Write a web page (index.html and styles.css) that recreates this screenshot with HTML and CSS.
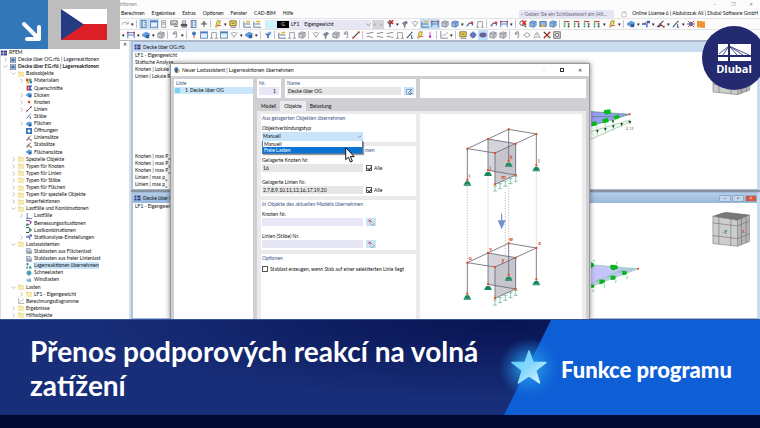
FILE: index.html
```html
<!DOCTYPE html>
<html lang="cs">
<head>
<meta charset="utf-8">
<title>Přenos podporových reakcí na volná zatížení</title>
<link rel="stylesheet" href="styles.css">
</head>
<body>
<svg class="defs" aria-hidden="true">
  <symbol id="folder" viewBox="0 0 10 10"><path d="M0 1h4l1 1h5v8H0z" fill="#e9d58b"/><path d="M0 3h10v7H0z" fill="#f8e9ae"/></symbol>
  <symbol id="rfem" viewBox="0 0 10 10"><path d="M0 1h10v8H0z" fill="#2b3c86"/><path d="M0 5h10M4 1v8" stroke="#fff"/></symbol>
  <symbol id="model" viewBox="0 0 10 10"><rect x="1" y="0" width="8" height="10" fill="#c7d6ea" stroke="#44546f"/><circle cx="5" cy="5" r="3" fill="#3b72b5"/></symbol>
  <symbol id="mat" viewBox="0 0 10 10"><path d="M0 1h4v4H0z" fill="#e23b2e"/><path d="M5 1h4v4H5z" fill="#3bb54a"/><path d="M1 5h4v4H1z" fill="#e8b52c"/><path d="M6 5h4v4H6z" fill="#3a78d6"/></symbol>
  <symbol id="isec" viewBox="0 0 10 10"><path d="M1 1h5v2H4v4h2v2H1z" fill="#d8322c"/><path d="M5 1h5v2H8v4h2v2H5z" fill="#2d5fc4"/></symbol>
  <symbol id="plate" viewBox="0 0 10 10"><path d="M0 4l5-3 5 2-1 4-4 2-5-3z" fill="#5f9bd8"/><path d="M5 5h4v4H5z" fill="#2f5f9e"/></symbol>
  <symbol id="dot" viewBox="0 0 10 10"><circle cx="5" cy="5" r="2" fill="#d43b32"/></symbol>
  <symbol id="line" viewBox="0 0 10 10"><path d="M1 9L9 1" stroke="#444" stroke-width="1.4"/><circle cx="1.5" cy="8.5" r="1.3" fill="#d43b32"/><circle cx="8.5" cy="1.5" r="1.3" fill="#d43b32"/></symbol>
  <symbol id="bar" viewBox="0 0 10 10"><path d="M1 9L8 1" stroke="#555" stroke-width="1.3"/><path d="M7 5v4h2" stroke="#3670b8" fill="none" stroke-width="1.4"/></symbol>
  <symbol id="hole" viewBox="0 0 10 10"><path d="M0 0h10v10H0z" fill="#3a75b9"/><circle cx="5" cy="5" r="2.5" fill="#fff"/></symbol>
  <symbol id="lset" viewBox="0 0 10 10"><path d="M0 9L8 1M2 9l3-3 4 3" stroke="#444" fill="none" stroke-width="1.3"/><circle cx="4" cy="5" r="1.2" fill="#d43b32"/><circle cx="8.500" cy="8.500" r="1.2" fill="#d43b32"/></symbol>
  <symbol id="lc" viewBox="0 0 10 10"><path d="M2 0v9h8" stroke="#4a6289" fill="none" stroke-width="1.3"/><path d="M0 9h5" stroke="#4a6289"/></symbol>
  <symbol id="ds" viewBox="0 0 10 10"><path d="M0 1h5l4 3-4 4H0" fill="none" stroke="#4b3d90" stroke-width="1.6"/><path d="M6 0l4 4-3 2z" fill="#d33bc0"/><path d="M0 6h3v4H0z" fill="#39a85a"/></symbol>
  <symbol id="co" viewBox="0 0 10 10"><path d="M0 1h5l4 4-4 4H0" fill="none" stroke="#333" stroke-width="1.6"/><path d="M5 2l5 3-5 2z" fill="#39a85a"/></symbol>
  <symbol id="sa" viewBox="0 0 10 10"><path d="M0 5h5" stroke="#2d62b6" stroke-width="2"/><path d="M6 1h4v3H7v5H5z" fill="#3b66b8"/><path d="M3 3h2v2H3z" fill="#d83b35"/></symbol>
  <symbol id="wiz" viewBox="0 0 10 10"><path d="M1 1h6l2 3v5H1z" fill="#e9eef6" stroke="#5d6f8d"/><path d="M2 8l5-5M3 3v4h5" stroke="#4379b8" fill="none"/><circle cx="7" cy="7" r="1.2" fill="#d43b32"/></symbol>
  <symbol id="react" viewBox="0 0 10 10"><path d="M1 0h3v4H1zM5 8l2-4 3 5H5zM0 9l2-4 2 4z" fill="#2a8f92"/></symbol>
  <symbol id="snow" viewBox="0 0 10 10"><circle cx="5" cy="5" r="4" fill="#6fb6c9"/><path d="M5 0v10M0 5h10M2 2l6 6M8 2L2 8" stroke="#2b8aa6" stroke-width=".8"/></symbol>
  <symbol id="wind" viewBox="0 0 10 10"><path d="M0 5h8M2 7h6M4 2l4 3-3 3" stroke="#3d96b5" fill="none" stroke-width="1.4"/></symbol>
  <symbol id="chart" viewBox="0 0 10 10"><path d="M1 0v9h9" stroke="#778" fill="none"/><path d="M2 7l3-3 2 1 3-4" stroke="#9ab" fill="none"/></symbol>
  <symbol id="undo" viewBox="0 0 10 10"><path d="M1 6c1-4 6-4 8-1M9 2v3H6" stroke="#999" fill="none"/></symbol>
  <symbol id="cols" viewBox="0 0 10 10"><rect x="1.500" y=".5" width="6" height="9" fill="#dfeaf7" stroke="#4f75a6"/><path d="M3 1v8M5 3h2M5 6h2" stroke="#6d8fbb"/></symbol>
  <symbol id="win" viewBox="0 0 10 10"><rect x=".5" y="1" width="9" height="8" fill="#d5e4f5" stroke="#5a83b6"/><path d="M1 2h8" stroke="#4777b2" stroke-width="1.6"/><path d="M2 5h6M2 7h6" stroke="#fff"/></symbol>
  <symbol id="sheet" viewBox="0 0 10 10"><path d="M2 .5h5v9H2z" fill="#f4f4f6" stroke="#8b8f9c"/><path d="M3 3h3M3 5h3" stroke="#888"/></symbol>
  <symbol id="graph" viewBox="0 0 10 10"><path d="M1 1h8v5H1z" fill="#f3f3f3" stroke="#555"/><path d="M2 5l2-2 2 2 2-2M5 8h5" stroke="#555" fill="none"/></symbol>
  <symbol id="print" viewBox="0 0 10 10"><path d="M1 5h8v3H1z" fill="#555"/><path d="M3 1h4v4H3zM3 8h5v2H3z" fill="#ddd" stroke="#555" stroke-width=".7"/></symbol>
  <symbol id="cross" viewBox="0 0 10 10"><path d="M5 1v8M1 5h8" stroke="#666" stroke-width="1.2"/><circle cx="5" cy="4" r="2" fill="#777"/></symbol>
  <symbol id="edit" viewBox="0 0 10 10"><path d="M2 9L4 1h4L7 5 3 9z" fill="#f4dc50" stroke="#756a2b" stroke-width=".7"/><path d="M4 7h5" stroke="#d8322c"/></symbol>
  <symbol id="note" viewBox="0 0 10 10"><path d="M1 1h8v6H1z" fill="#f2d648" stroke="#706330"/><path d="M3 4h4M2 9h7" stroke="#555"/></symbol>
  <symbol id="load" viewBox="0 0 10 10"><path d="M1 2v7h9M2 5h7" stroke="#3e5e8a" fill="none"/><path d="M4 2h5" stroke="#e3b832" stroke-width="2"/></symbol>
  <symbol id="frame" viewBox="0 0 10 10"><path d="M1 9V2h8v7M1 5h8" stroke="#3f6fb0" fill="none" stroke-width="1.1"/><path d="M0 2h2M8 2h2" stroke="#d34" stroke-width="2"/></symbol>
  <symbol id="gframe" viewBox="0 0 10 10"><path d="M2 9V2h6v7M0 9h4M6 9h4" stroke="#8a8d94" fill="none"/></symbol>
  <symbol id="rows" viewBox="0 0 10 10"><path d="M1 3h3l1-1h4M1 7h4l2 1h2" stroke="#858990" fill="none" stroke-width="1.2"/></symbol>
  <symbol id="vee" viewBox="0 0 10 10"><path d="M1 2l4 6 4-6M3 2h4" stroke="#888c94" fill="none"/></symbol>
  <symbol id="filt" viewBox="0 0 10 10"><path d="M1 2h8L6 6v3H4V6z" fill="#3f72b4"/><path d="M4 0l5 5M9 0L4 5" stroke="#d8221c" stroke-width="1.7"/></symbol>
  <symbol id="bfilt" viewBox="0 0 10 10"><path d="M1 3h8L6 6v3H4V6z" fill="#3f72b4"/><path d="M5 1h4v3H5z" fill="#7da7dc"/></symbol>
  <symbol id="fun" viewBox="0 0 10 10"><path d="M1 4l5-3 3 2-3 3-1 4H4L3 6z" fill="#7b8798"/></symbol>
  <symbol id="gbox" viewBox="0 0 10 10"><path d="M1 3l3-2 5 1v5L6 9 1 8z" fill="#c7cad1" stroke="#777b85" stroke-width=".8"/><path d="M1 3l5 1 3-2M6 4v5" stroke="#777b85" fill="none" stroke-width=".8"/></symbol>
  <symbol id="bbox" viewBox="0 0 10 10"><path d="M1 3l3-2 5 1v5L6 9 1 8z" fill="#8fb7e3" stroke="#3e6da9" stroke-width=".8"/><path d="M1 3l5 1 3-2M6 4v5" stroke="#3e6da9" fill="none" stroke-width=".8"/></symbol>
  <symbol id="mark" viewBox="0 0 10 10"><path d="M1 8l3-4h4v3" stroke="#3c69ae" fill="none" stroke-width="1.5"/><path d="M6 2h3v3H6z" fill="#d43b32"/></symbol>
  <symbol id="find" viewBox="0 0 10 10"><circle cx="4" cy="4" r="3" fill="none" stroke="#555"/><path d="M6 6l3 3" stroke="#555" stroke-width="1.5"/><path d="M4 1l5 5M9 1L4 6" stroke="#d8221c" stroke-width="1.7"/></symbol>
  <symbol id="axes" viewBox="0 0 10 10"><path d="M2 1v8" stroke="#3a9a55" stroke-width="2" stroke-dasharray="2 1"/><path d="M3 2h5" stroke="#d33" stroke-width="1.5"/><path d="M7 4v5" stroke="#333" stroke-width="2" stroke-dasharray="2 1"/></symbol>
  <symbol id="star" viewBox="0 0 10 10"><path d="M1 1l8 8M9 1L1 9M0 5h10" stroke="#d43a39" stroke-width="1.2"/><circle cx="5" cy="5" r="2.500" fill="#4b70bb"/></symbol>
  <symbol id="orange" viewBox="0 0 10 10"><path d="M0 1l10 1v8L0 9z" fill="#f19336"/></symbol>
  <symbol id="cube" viewBox="0 0 10 10"><path d="M1 2h8v6H1z" fill="#8eb9ea" stroke="#315f9b"/><path d="M3 6h4v3H3z" fill="#e5b43a"/></symbol>
  <symbol id="pin" viewBox="0 0 10 10"><path d="M4 1h3v7H5" stroke="#888" fill="none"/><circle cx="4" cy="3" r="2" fill="#a7abb4"/></symbol>
  <symbol id="bpin" viewBox="0 0 10 10"><path d="M5 3v6" stroke="#d53" stroke-width="1.2"/><circle cx="5" cy="3" r="2.500" fill="#3f7ac0"/></symbol>
  <symbol id="mag" viewBox="0 0 10 10"><path d="M5 1v5" stroke="#b13cbf"/><circle cx="5" cy="7" r="1.500" fill="#c21fc0"/></symbol>
  <symbol id="del" viewBox="0 0 10 10"><path d="M1 1l8 8" stroke="#333" stroke-width="1.500"/><path d="M9 1L1 9" stroke="#d8221c" stroke-width="1.800"/></symbol>
  <symbol id="dia" viewBox="0 0 10 10"><path d="M1 5l4-3 4 3-4 3z" fill="none" stroke="#888"/></symbol>
  <symbol id="tri" viewBox="0 0 10 10"><path d="M5 1v8M4 2L1 8h3M6 2l3 6H6" fill="none" stroke="#888" stroke-width=".8"/></symbol>
  <symbol id="cam" viewBox="0 0 10 10"><rect x="1" y="1" width="8" height="8" fill="#ddd" stroke="#555"/><circle cx="5" cy="5" r="2" fill="#fff" stroke="#555"/></symbol>
  <symbol id="gear" viewBox="0 0 10 10"><circle cx="5" cy="5" r="2.500" fill="none" stroke="#4a5fa8" stroke-width="1.800"/><path d="M5 0v10M0 5h10M2 2l6 6M8 2L2 8" stroke="#4a5fa8" stroke-width=".7"/></symbol>
  <symbol id="disc" viewBox="0 0 10 10"><ellipse cx="5" cy="5" rx="4.500" ry="3" fill="#4870aa"/><path d="M2 7l6-4" stroke="#d33" stroke-width="1.300"/></symbol>
  <symbol id="pick" viewBox="0 0 10 10"><path d="M1 1l3 3M4 1L1 4" stroke="#d8322c" stroke-width="1.400"/><path d="M4 3l5 4-2 .4L8 9 7 9.500 6 8 4.500 9z" fill="#fff" stroke="#777" stroke-width=".7"/></symbol>
  <symbol id="pen" viewBox="0 0 10 10"><path d="M1 2h6v7H1z" fill="#eef5fc" stroke="#5180ae" stroke-width=".9"/><path d="M3 7l6-6M4 8h5" stroke="#37628e" stroke-width="1.100"/></symbol>
  <symbol id="viewcube" viewBox="390 390 122 114">
    <path d="M396 408l38-12 72 8-36 16z" fill="#777"/><path d="M396 408l74 12v78l-74-8z" fill="#cdcdcd"/><path d="M470 420l36-16v80l-36 14z" fill="#b5b5b5"/>
    <path d="M396 428l74 9 36-15M396 466l74 9 36-15M414 411v81M450 417v79M482 415v79M496 409v79M408 404l76 11M420 400l74 8M420 412l36-13M450 417l34-15" stroke="#777" stroke-width="2" fill="none"/>
    <path d="M396 408l38-12 72 8v80l-36 14-74-8zM396 408l74 12v78M470 420l36-16" fill="none" stroke="#666" stroke-width="1.500"/>
  </symbol>
</svg>

<main class="stage">
  <section class="screen">
    <header class="titlebar">
      <span class="app-title">ktionen</span>
      <div class="winctl"><button aria-label="Minimieren">–</button><button aria-label="Wiederherstellen">❐</button><button aria-label="Schließen">✕</button></div>
    </header>
    <nav class="menubar">
      <a href="#">Berechnen</a><a href="#">Ergebnisse</a><a href="#">Extras</a><a href="#">Optionen</a><a href="#">Fenster</a><a href="#">CAD-BIM</a><a href="#">Hilfe</a>
      <input class="search" type="text" aria-label="Suche" placeholder="‣ Geben Sie ein Schlüsselwort ein (Alt...">
      <svg class="lic" viewBox="0 0 10 10"><path d="M1 3h8v6H1zM3 1h5v2" /></svg>
      <span class="license">Online License 6 | Abdulrzzak Ali | Dlubal Software GmbH</span>
    </nav>
    <div class="toolbar">
      <div class="tools" data-tools="undo v | cols* win* sheet graph print cols cross | edit v note | load load"></div>
      <div class="caselist"><i class="swatch"></i><b class="tag">G</b><span class="case">LF1</span><span>Eigengewicht</span><svg class="chev" viewBox="0 0 10 10"><path d="M1 3l4 4 4-4"/></svg></div>
      <div class="step"><button aria-label="Zurück">‹</button><button aria-label="Weiter">›</button></div>
      <div class="tools" data-tools="filt v fun vee load* frame* gbox bbox v mark gframe | mark frame v | find bbox cube bbox | axes axes axes axes v edit v | plate v sa v lset v bar v star orange"></div>
    </div>
    <div class="toolbar second">
      <div class="tools" data-tools="v frame v plate v gbox | pin v | bpin win gframe win vee v plate v | bfilt | load gframe gbox | vee fun gbox pin line | rows rows rows gframe bar edit mag | chart v | note gear disc* gbox gbox | pin dia tri del cam"></div>
    </div>
    <div class="work">
      <aside class="nav">
        <div class="nav-head"><button aria-label="Navigator schließen">✕</button></div>
        <ul class="tree" id="tree"></ul>
      </aside>
      <div class="mdi">
        <section class="doc upper">
          <h2 class="doc-title"><svg><use href="#rfem"/></svg>Decke über OG.rf6</h2>
          <div class="doc-body">
            <div class="legend">
              <p>LF1 - Eigengewicht<br>Statische Analyse<br>Knoten | Lokale<br>Linien | Lokale R</p>
              <p>Knoten | max P<sub>x</sub><br>Knoten | max P<sub>y</sub><br>Knoten | max P<sub>z</sub><br>Linien | max p<sub>y</sub><br>Linien | max p<sub>z</sub></p>
            </div>
            <svg class="canvas" viewBox="30 -90 498 411">
              <path d="M20 88l126 9-126 38z" fill="#9b9cf5"/><path d="M20 88l126 9-126 38M20 104h90" fill="none" stroke="#3f8f6c" stroke-width="2"/>
              <path d="M20 152l127-38v6l-127 56" fill="#f5fbf5" stroke="#6fa37a" stroke-width="1.500"/>
              <path d="M49 147v15M73 141v14M97 133v14M122 126v10" stroke="#6fa37a"/>
              <g fill="#05bd19"><path d="M70 84l18-2 2 13-16 3-6-7z"/><path d="M32 121l14-4 2 13-14 3z"/><path d="M64 112l16-5 3 14-18 3z"/><path d="M97 102l16-4 4 9-16 6z"/></g>
              <g fill="#0b5520"><path d="M45 144h8l-4 9zM69 138h8l-4 9zM93 130h8l-4 9zM118 123h8l-4 9zM142 117h9l-4 9zM91 115h9l-4 8z"/></g>
              <path d="M48 132v12M73 122v12M97 115v12" stroke="#0b8d25"/>
              <circle cx="146" cy="97" r="3" fill="#f22"/><text x="134" y="143" class="val">2.12</text>
              <use href="#viewcube" x="390" y="-70" width="122" height="114"/>
            </svg>
          </div>
        </section>
        <section class="doc lower">
          <h2 class="doc-title"><svg><use href="#rfem"/></svg>Decke über E<span class="docctl"><button aria-label="Minimieren">–</button><button aria-label="Maximieren">▫</button><button class="close" aria-label="Schließen">×</button></span></h2>
          <div class="doc-body">
            <div class="legend"><p>LF1 - Eigengewicht</p></div>
            <svg class="canvas" viewBox="30 368 498 352">
              <path d="M20 553l151 13-151 57z" fill="#c6c5fb"/><path d="M20 553l151 13-151 57M30 610l90-40 35-2" fill="none" stroke="#7fcf9a" stroke-width="2"/>
              <g fill="#07b51c"><path d="M88 554l20 1 3 10-16 6-8-7z"/><path d="M28 546l10 4v9l-10 5z"/><path d="M30 613l9 1v8l-9 2z"/><path d="M55 598l16 1-1 10-16 4z"/><path d="M88 586l15 1v11l-14 2z"/><path d="M122 572l15 1v10l-13 2z"/></g>
              <path d="M36 545l4-6M104 552l5-7M38 628l-4 8M71 613l-2 10M105 600l-2 9M139 588l-2 9M46 606l8-8M78 594l9-8M112 580l9-7" stroke="#35c34b" stroke-width="2"/>
              <circle cx="171" cy="566" r="3" fill="#f33"/>
              <use href="#viewcube" x="390" y="390" width="122" height="114"/>
              <text x="426" y="460" class="ax-y">-Y</text><text x="484" y="458" class="ax-x">X</text>
            </svg>
          </div>
        </section>
      </div>
    </div>

    <section class="dialog" role="dialog" aria-labelledby="dlg-title">
      <header class="dlg-bar">
        <svg viewBox="0 0 10 10"><circle cx="4" cy="4" r="3.500" fill="#3b6db3"/><path d="M4 9l5-5 1 3-3 3z" fill="#ecb92f"/><path d="M1 6l4-1 1 4-3 1z" fill="#45566e"/></svg>
        <h1 id="dlg-title">Neuer Lastassistent | Lagerreaktionen übernehmen</h1>
        <div class="winctl"><button class="dim" aria-label="Minimieren">–</button><button class="max" aria-label="Maximieren"><i></i></button><button aria-label="Schließen">✕</button></div>
      </header>
      <div class="dlg-body">
        <div class="list"><h3>Liste</h3><div class="list-row"><i></i><span>1</span>Decke über OG</div></div>
        <div class="main">
          <div class="top">
            <div class="box nr"><label for="nr">Nr.</label><input id="nr" type="text" value="1"></div>
            <div class="box name"><label for="nm">Name</label><div class="field"><input id="nm" class="ro" type="text" value="Decke über OG"><button class="sq" aria-label="Name bearbeiten"><svg><use href="#pen"/></svg></button></div></div>
            <div class="box blank"></div>
          </div>
          <div class="tabs" role="tablist"><button role="tab">Modell</button><button role="tab" class="on" aria-selected="true">Objekte</button><button role="tab">Belastung</button></div>
          <div class="page">
            <div class="forms">
              <section class="panel p1">
                <h3>Aus gelagerten Objekten übernehmen</h3>
                <label for="typ">Objektverbindungstyp</label>
                <div class="combo">
                  <select id="typ"><option>Manuell</option><option>Freie Lasten</option></select>
                  <svg class="chev" viewBox="0 0 10 10"><path d="M1 3l4 4 4-4"/></svg>
                  <ul class="drop"><li>Manuell</li><li class="hot">Freie Lasten</li></ul>
                  <svg class="cursor" viewBox="0 0 10 16"><path d="M.7.700v12l2.700-2.500 2 4.800 2-.900-2-4.500h3.800z"/></svg>
                </div>
              </section>
              <section class="panel p2">
                <h3 class="tail">men</h3>
                <label for="gk">Gelagerte Knoten Nr.</label>
                <div class="field"><input id="gk" class="ro" type="text" value="16"><label class="check"><input type="checkbox" checked>Alle</label></div>
                <label class="spaced" for="gl">Gelagerte Linien Nr.</label>
                <div class="field"><input id="gl" class="ro" type="text" value="2,7,8,9,10,11,12,16,17,19,20"><label class="check"><input type="checkbox" checked>Alle</label></div>
              </section>
              <section class="panel p3">
                <h3>In Objekte des aktuellen Modells übernehmen</h3>
                <label for="kn">Knoten Nr.</label>
                <div class="field"><input id="kn" type="text"><button class="sq" aria-label="Knoten wählen"><svg><use href="#pick"/></svg></button></div>
                <label class="spaced" for="ln">Linien (Stäbe) Nr.</label>
                <div class="field"><input id="ln" type="text"><button class="sq" aria-label="Linien wählen"><svg><use href="#pick"/></svg></button></div>
              </section>
              <section class="panel p4">
                <h3>Optionen</h3>
                <label class="check"><input type="checkbox">Stablast erzeugen, wenn Stab auf einer selektierten Linie liegt</label>
              </section>
            </div>
            <div class="picture">
              <svg viewBox="15 162 489 618">
                <defs>
                  <g id="house">
                    <path d="M219 237l83 14v94l-83-14z" fill="#d5d4da"/><path d="M240 279l62-28v94l-62 28z" fill="#c3c2c9" fill-opacity=".85"/>
                    <path d="M157 266l124-58 83 14-124 57zM219 237l83 14M157 266v98M219 237v94M240 279v94M302 251v94M364 222v98M281 208v98M219 331l83 14-62 28" fill="none" stroke="#686777" stroke-width="2.500"/>
                    <g fill="#178a5c"><path d="M152 364h10l6 10h-22zM214 336h10l6 9h-22zM276 308h10l6 9h-22zM359 321h10l6 10h-22z"/><path d="M146 374h22v3h-22zM208 345h22v3h-22zM270 317h22v3h-22zM353 331h22v3h-22z"/></g>
                    <path d="M240 378v15M234 378h12M234 393h12M255 371v15M249 371h12M249 386h12M271 364v15M265 364h12M265 379h12M287 356v15M281 356h12M281 371h12M302 349v15M296 349h12M296 364h12" fill="none" stroke="#55b088" stroke-width="2"/>
                    <g fill="#e84a1c"><path d="M154 263h6v6h-6zM216 234h6v6h-6zM237 276h6v6h-6zM299 248h6v6h-6zM278 205h6v6h-6zM361 219h6v6h-6zM154 356h6v6h-6zM216 328h6v6h-6zM237 370h6v6h-6zM299 342h6v6h-6zM278 299h6v6h-6zM361 313h6v6h-6z"/></g>
                  </g>
                </defs>
                <path d="M157 378v228M219 349v229M271 396v210M281 320v230M364 334v230" stroke="#8b8b91" stroke-width="2" stroke-dasharray="3 5"/>
                <use href="#house"/><use href="#house" y="342"/>
                <path d="M260 461v22" stroke="#5f84c5" stroke-width="3"/><path d="M248 481h24l-12 27z" fill="#6f92cf"/>
                <g class="lbl"><text x="161" y="355">i</text><text x="224" y="329">j</text><text x="284" y="297">k</text><text x="370" y="309">l</text><text x="259" y="357">m</text><text x="161" y="600">u</text><text x="223" y="572">v</text><text x="282" y="542">w</text><text x="370" y="556">x</text><text x="260" y="606">y</text></g>
              </svg>
            </div>
          </div>
        </div>
      </div>
    </section>

    <div class="badges">
      <svg class="arrow" viewBox="0 0 48 49"><path d="M24 24l14 14M39 27v12H27"/></svg>
      <div class="flagbox"><svg class="flag" viewBox="0 0 46 31"><path d="M0 0h46v16H0z" fill="#fff"/><path d="M0 15h46v16H0z" fill="#dc1f26"/><path d="M0 0l23 15.500L0 31z" fill="#243c84"/></svg></div>
    </div>
    <div class="brand">
      <svg viewBox="0 0 33 17"><path d="M0 0h33v17H0z" fill="#fff"/><path d="M0 11h33v2H0z" fill="#232a70"/><path d="M10 0h2v17h-2z" fill="#232a70"/><path d="M11 2L1 10M11 2L5 11M11 2l20 9M11 2l14 9M11 2l8 9" stroke="#232a70" stroke-width=".8" fill="none"/></svg>
      <span>Dlubal</span>
    </div>
  </section>

  <section class="banner">
    <p class="headline">Přenos podporových reakcí na volná zatížení</p>
    <div class="kind">
      <span>Funkce programu</span>
    </div>
    <svg class="glowstar" viewBox="0 0 72 72">
      <defs>
        <radialGradient id="glow"><stop offset="0" stop-color="#2fb4f6" stop-opacity=".95"/><stop offset=".45" stop-color="#2496e6" stop-opacity=".6"/><stop offset="1" stop-color="#1c7fe0" stop-opacity="0"/></radialGradient>
        <linearGradient id="ice" x1="0" y1="0" x2="1" y2="1"><stop offset="0" stop-color="#5ccbfb"/><stop offset=".5" stop-color="#86d8fd"/><stop offset="1" stop-color="#e6f8ff"/></linearGradient>
      </defs>
      <circle cx="36" cy="37" r="30" fill="url(#glow)"/>
      <path d="M36 20l4 11.500h13L42.700 39.500 46.500 52 36 44.700 25.500 52l3.800-12.500L19 31.500h13z" fill="url(#ice)" stroke="url(#ice)" stroke-width="1.500" stroke-linejoin="round"/>
    </svg>
  </section>
  <div class="strip"></div>
</main>
<script src="app.js"></script>
</body>
</html>
```

FILE: styles.css
```css
* { box-sizing: border-box; margin: 0; padding: 0; }
body { background: #020a33; color: #111; font: 5px/7px Lato, "Open Sans", sans-serif; overflow: hidden; }
button, input, select { font: inherit; color: inherit; border: 0; background: none; border-radius: 0; min-width: 0; appearance: none; }
h1, h2, h3 { font-size: 5px; font-weight: 400; }
ul { list-style: none; }
a { color: inherit; text-decoration: none; }
svg { display: block; flex: none; }
.defs { position: absolute; width: 0; height: 0; }

.stage { display: grid; grid-template-rows: minmax(0, 1fr) auto 13px; height: 100vh; }
.screen { position: relative; display: flex; flex-direction: column; overflow: hidden; background: #fcfcfc; }

/* application chrome */
.titlebar { display: flex; justify-content: space-between; height: 9px; padding-left: 120px; color: #888; line-height: 9px; }
.winctl { display: flex; }
.winctl button { width: 18px; text-align: center; }
.menubar { display: flex; align-items: center; height: 9px; padding: 0 2px 0 121px; gap: 7px; }
.search { margin-left: auto; width: 95px; height: 8px; padding: 0 2px; }
.search::placeholder { color: #667; opacity: 1; }
.lic { width: 6px; height: 6px; fill: none; stroke: #aaa; }
.license { margin-left: -2px; }
.toolbar { display: flex; align-items: center; height: 11px; padding-left: 120px; border-top: 1px solid #e4e4e6; }
.tools { display: flex; align-items: center; }
.tools button { display: grid; place-items: center; width: 10px; height: 10px; }
.tools button.on { background: #c3e0f8; }
.tools svg { width: 8px; height: 8px; }
.tools .more { width: 5px; }
.tools .sep { width: 1px; height: 8px; margin: 0 2px 0 1px; background: #c4c4c8; }
.second { padding-left: 121px; }
.caselist { display: flex; align-items: center; width: 106px; height: 9px; margin-left: 3px; background: #e6e6f5; }
.swatch { width: 9px; height: 7px; margin: 0 2px 0 1px; background: #c5f6fb; }
.tag { width: 12px; height: 7px; background: #000; color: #aaa; text-align: center; }
.case { margin: 0 5px 0 2px; }
.chev { width: 5px; height: 5px; margin-left: auto; fill: none; stroke: #556; stroke-width: 1; }
.step { display: flex; margin: 0 1px; }
.step button { width: 6px; height: 9px; background: #d6d6d8; }

.work { flex: 1; display: flex; min-height: 0; border-top: 1px solid #b5b7ba; }
.nav { display: flex; flex-direction: column; width: 131px; background: #fff; border-left: 1px solid #ddd; border-right: 2px solid #dcdde0; }
.nav-head { height: 8px; text-align: right; padding-right: 2px; }
.tree { flex: 1; display: grid; grid-auto-rows: minmax(0, 1fr); }
.tree li { display: flex; align-items: center; gap: 2px; padding-left: 2px; white-space: nowrap; }
.tree li.l1 { padding-left: 10px; }
.tree li.l2 { padding-left: 18px; }
.tree li.root { padding-left: 0; }
.tree .tw { width: 5px; height: 5px; fill: none; stroke: #777; stroke-width: 1; }
.tree .ic { width: 6px; height: 6px; }
.tree .bold { font-weight: 700; }
.tree .sel span { background: #c5e3fa; }

.mdi { flex: 1; display: grid; grid-template-rows: 151px minmax(0, 1fr); min-width: 0; background: #8c9299; }
.doc { display: flex; flex-direction: column; min-height: 0; border: 1px solid #9eb8d6; border-right: 3px solid #c8dbef; border-left: 2px solid #a9c5e6; background: #fff; }
.doc-title { display: flex; align-items: center; gap: 2px; height: 10px; padding-left: 1px; background: #cadcef; }
.doc-title svg { width: 7px; height: 6px; }
.upper { margin-bottom: 2px; }
.lower .doc-title { background: linear-gradient(#b4cce8, #98b8dc); }
.docctl { display: flex; gap: 1px; margin-left: auto; }
.docctl button { width: 12px; height: 7px; border: 1px solid #8fa9c8; border-radius: 1px; background: #c3d6ec; line-height: 5px; }
.docctl .close { background: #d4593c; color: #fff; }
.doc-body { flex: 1; display: flex; justify-content: space-between; min-height: 0; overflow: hidden; }
.legend { display: flex; flex-direction: column; justify-content: space-between; padding: 0 2px 1px; }
.upper .legend { height: 137px; }
.legend sub { font-size: 4px; line-height: 1px; }
.canvas { width: 166px; height: 137px; }
.lower .canvas { height: 117px; }
.val { font: 12px "Open Sans", sans-serif; fill: #254d2f; }
.ax-y { font: 700 14px "Open Sans", sans-serif; fill: #198a35; }
.ax-x { font: 700 11px "Open Sans", sans-serif; fill: #d43b3b; }

/* load wizard dialog */
.dialog { position: absolute; top: 63px; bottom: 0; left: 170px; right: 170px; display: flex; flex-direction: column; border: 1px solid #999; border-bottom: 0; background: #d0d0d4; box-shadow: 0 0 5px rgba(0, 0, 0, .5); }
.dlg-bar { display: flex; align-items: center; gap: 2px; height: 12px; padding-left: 3px; background: #fff; }
.dlg-bar svg { width: 6px; height: 6px; }
.dlg-bar h1 { flex: 1; }
.dim { color: #aaa; }
.max i { display: inline-block; width: 4px; height: 4px; border: 1px solid #333; }
.dlg-body { flex: 1; display: flex; gap: 4px; min-height: 0; padding: 3px 3px 0; }
.list { width: 79px; background: #fff; }
.list h3 { padding-left: 2px; line-height: 8px; }
h3, .box label { color: #3c5488; }
.list-row { display: flex; align-items: center; gap: 2px; height: 7px; padding-left: 1px; background: #c9e6fb; }
.list-row i { width: 5px; height: 5px; background: #7fd3f0; margin-right: 3px; }
.main { flex: 1; display: flex; flex-direction: column; min-width: 0; }
.top { display: flex; gap: 4px; height: 19px; }
.box { background: #fff; padding: 0 2px; }
.box label { display: block; line-height: 8px; }
.nr { width: 24px; }
.nr input { display: block; width: 100%; height: 8px; padding-right: 3px; text-align: right; }
.name { width: 131px; }
.name .field input { flex: 1; }
.blank { flex: 1; }
.field { display: flex; align-items: center; gap: 3px; height: 8px; }
input[type="text"] { background: #e6e6f4; }
input.ro[type="text"] { background: #e6e6e6; }
.field input[type="text"] { width: 101px; height: 8px; padding: 0 1px; }
.sq { display: grid; place-items: center; width: 10px; height: 8px; background: #c9e3f8; }
.sq svg { width: 7px; height: 7px; }
.tabs { display: flex; height: 10px; margin-top: 3px; }
.tabs button { height: 10px; padding: 0 4px; }
.tabs .on { background: #ebebed; }
.page { flex: 1; display: flex; gap: 4px; min-height: 0; padding: 3px 4px 0; background: #ebebed; }
.forms { display: flex; flex-direction: column; gap: 4px; width: 155px; }
.panel { padding: 0 1px; background: #fff; }
.panel h3 { line-height: 8px; white-space: nowrap; }
.panel h3.tail { padding-left: 103px; }
.panel > label { display: block; line-height: 8px; margin-top: 2px; }
.panel > label.spaced { margin-top: 6px; }
.p1 { padding-bottom: 1px; }
.p2, .p3 { padding-bottom: 2px; }
.p4 { flex: 1; }
.p4 > .check { display: flex; margin-top: 3px; }
.combo { position: relative; display: flex; align-items: center; width: 101px; }
.combo select { width: 100%; height: 9px; padding-left: 1px; background: #c9e3f8; }
.combo .chev { position: absolute; right: 1px; }
.drop { position: absolute; z-index: 1; top: 9px; left: 0; right: 0; border: 1px solid #4d7aa8; border-top: 0; background: #fff; box-shadow: 1px 1px 1px rgba(0, 0, 0, .4); line-height: 6px; }
.drop li { padding-left: 1px; }
.drop .hot { background: #0a74d4; color: #fff; }
.cursor { position: absolute; z-index: 2; top: 15px; left: 83px; width: 10px; height: 16px; fill: #fff; stroke: #111; stroke-width: 1; }
.check { display: flex; align-items: center; gap: 2px; }
.check input { position: relative; width: 6px; height: 6px; border: 1px solid #555; background: #fff; }
.check input:checked::after { content: ""; position: absolute; left: 1px; top: 0; width: 2px; height: 3px; border: solid #333; border-width: 0 1px 1px 0; transform: rotate(40deg); }
.picture { flex: 1; overflow: hidden; background: #fff; }
.picture svg { width: 163px; height: 206px; }
.lbl { font: 700 14px "Open Sans", sans-serif; fill: #e04a22; }

/* overlays */
.badges { position: absolute; top: 0; left: 0; display: flex; height: 49px; }
.arrow { width: 48px; height: 49px; background: #3277b8; fill: none; stroke: #fff; stroke-width: 4; stroke-linecap: round; stroke-linejoin: round; }
.flagbox { display: grid; place-items: center; width: 72px; background: #bdbdbd; }
.flag { width: 46px; height: 31px; }
.brand { position: absolute; top: 26px; right: -6px; display: flex; flex-direction: column; align-items: center; width: 64px; height: 64px; padding-top: 18px; border-radius: 50%; background: #232a70; color: #fff; font: 700 11px/15px "Open Sans", sans-serif; }
.brand svg { width: 33px; height: 17px; }

/* caption */
.banner { position: relative; display: flex; align-items: stretch; justify-content: space-between; height: 96px; border-top: 1px solid #34519c; background: radial-gradient(ellipse at 66% 0, #091452 0, #0c1a5c 15%, #182e79 60%); color: #fff; }
.headline { flex: 1; padding: 14px 20px 0 30px; font: 700 28px/34px Lato, sans-serif; }
.kind { display: flex; align-items: center; width: 256px; padding: 4px 0 0 57px; background: #0e5ed6; clip-path: polygon(47px 0, 100% 0, 100% 100%, 0 100%); font: 900 22px/26px Lato, sans-serif; white-space: nowrap; }
.glowstar { position: absolute; right: 195px; top: 11px; width: 72px; height: 72px; }
.strip { background: #020a33; }
```

FILE: app.js
```js
const icon = (id, cls = "") => `<svg class="${cls}"><use href="#${id}"/></svg>`;

/* Toolbar strings: "v" = menu arrow, "|" = separator, trailing "*" = pressed. */
document.querySelectorAll("[data-tools]").forEach((bar) => {
  bar.innerHTML = bar.dataset.tools.split(" ").map((t) => {
    if (t === "|") return '<span class="sep"></span>';
    if (t === "v") return '<button class="more" aria-label="Menü">▾</button>';
    const on = t.endsWith("*");
    const id = t.replace("*", "");
    return `<button class="${on ? "on" : ""}" aria-label="${id}">${icon(id)}</button>`;
  }).join("");
});

/* Level, state (> closed, v open, - leaf), icon, caption. */
const rows = [
  [0, "r", "rfem", "RFEM"],
  [0, ">", "model", "Decke über OG.rf6 | Lagerreaktionen"],
  [0, "v", "model", "Decke über EG.rf6 | Lagerreaktionen", "bold"],
  [1, "v", "folder", "Basisobjekte"],
  [2, ">", "mat", "Materialien"],
  [2, "-", "isec", "Querschnitte"],
  [2, ">", "plate", "Dicken"],
  [2, ">", "dot", "Knoten"],
  [2, ">", "line", "Linien"],
  [2, "-", "bar", "Stäbe"],
  [2, ">", "plate", "Flächen"],
  [2, "-", "hole", "Öffnungen"],
  [2, "-", "lset", "Liniensätze"],
  [2, "-", "lset", "Stabsätze"],
  [2, "-", "plate", "Flächensätze"],
  [1, ">", "folder", "Spezielle Objekte"],
  [1, ">", "folder", "Typen für Knoten"],
  [1, ">", "folder", "Typen für Linien"],
  [1, ">", "folder", "Typen für Stäbe"],
  [1, ">", "folder", "Typen für Flächen"],
  [1, ">", "folder", "Typen für spezielle Objekte"],
  [1, ">", "folder", "Imperfektionen"],
  [1, "v", "folder", "Lastfälle und Kombinationen"],
  [2, ">", "lc", "Lastfälle"],
  [2, "-", "ds", "Bemessungssituationen"],
  [2, "-", "co", "Lastkombinationen"],
  [2, ">", "sa", "Statikanalyse-Einstellungen"],
  [1, "v", "folder", "Lastassistenten"],
  [2, "-", "wiz", "Stablasten aus Flächenlast"],
  [2, "-", "wiz", "Stablasten aus freier Linienlast"],
  [2, "-", "react", "Lagerreaktionen übernehmen", "sel"],
  [2, "-", "snow", "Schneelasten"],
  [2, "-", "wind", "Windlasten"],
  [1, "v", "folder", "Lasten"],
  [2, ">", "folder", "LF1 - Eigengewicht"],
  [1, "-", "chart", "Berechnungsdiagramme"],
  [1, ">", "folder", "Ergebnisse"],
  [1, ">", "folder", "Hilfsobjekte"],
];
const twist = { ">": "M3 1l4 4-4 4", v: "M1 3l4 4 4-4", "-": "" };
document.getElementById("tree").innerHTML = rows.map(([lvl, st, ic, text, cls = ""]) => {
  const tw = st === "r" ? "" : `<svg class="tw" viewBox="0 0 10 10"><path d="${twist[st]}"/></svg>`;
  return `<li class="l${lvl} ${cls} ${st === "r" ? "root" : ""}">${tw}${icon(ic, "ic")}<span>${text}</span></li>`;
}).join("");
```
